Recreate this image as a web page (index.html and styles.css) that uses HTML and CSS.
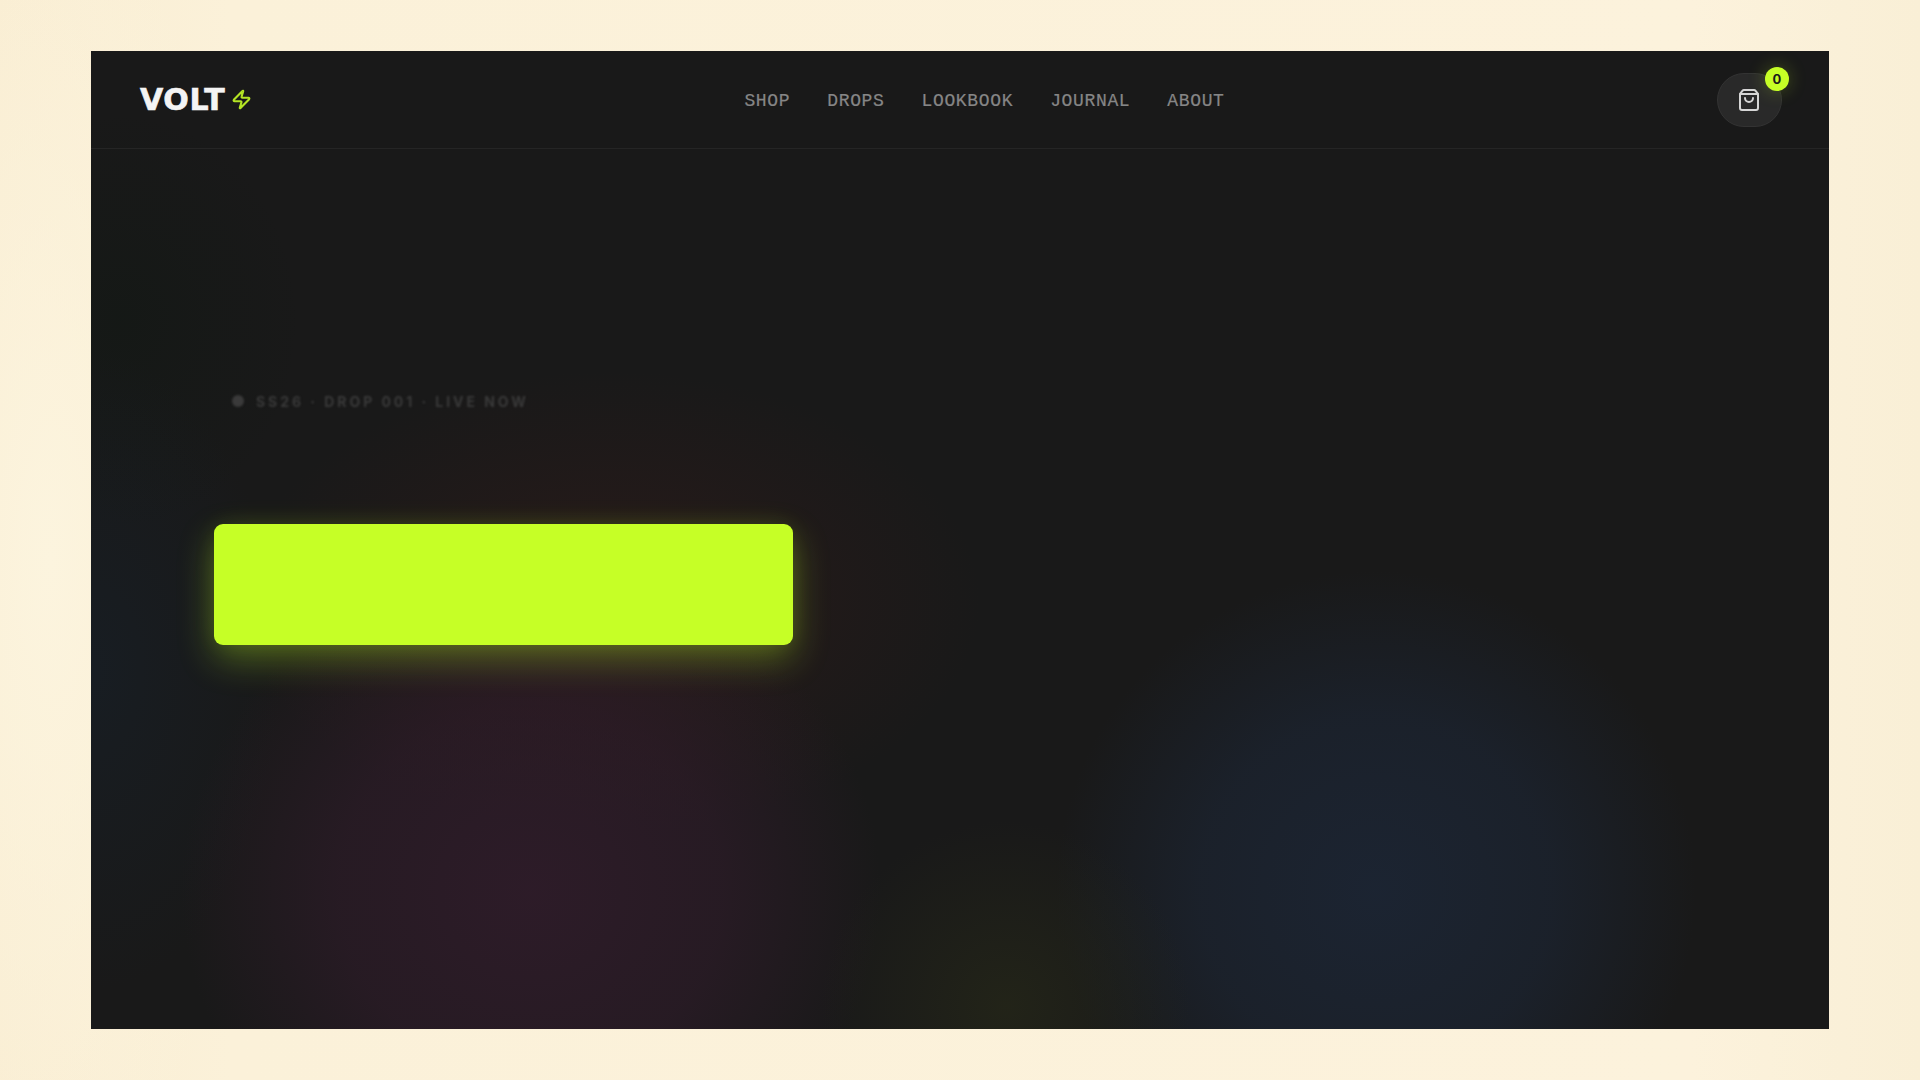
FILE: index.html
```html
<!DOCTYPE html>
<html lang="en">
<head>
<meta charset="utf-8">
<title>VOLT</title>
<link rel="stylesheet" href="styles.css">
</head>
<body>
<div class="stage">
  <div class="blob blob-corner"></div>
  <div class="blob blob-left"></div>
  <div class="blob blob-red"></div>
  <div class="blob blob-plum"></div>
  <div class="blob blob-blue"></div>
  <div class="blob blob-olive"></div>
  <header class="topbar">
    <a class="logo">VOLT
      <svg class="logo-bolt" viewBox="0 0 24 24" fill="none" stroke="currentColor" stroke-width="2.4" stroke-linecap="round" stroke-linejoin="round"><path d="M4 14a1 1 0 0 1-.78-1.63l9.9-10.2a.5.5 0 0 1 .86.46l-1.92 6.02A1 1 0 0 0 13 10h7a1 1 0 0 1 .78 1.63l-9.9 10.2a.5.5 0 0 1-.86-.46l1.92-6.02A1 1 0 0 0 11 14z"/></svg>
    </a>
    <nav class="nav">
      <a>SHOP</a><a>DROPS</a><a>LOOKBOOK</a><a>JOURNAL</a><a>ABOUT</a>
    </nav>
    <button class="cart">
      <svg class="cart-icon" viewBox="0 0 24 24" fill="none" stroke="currentColor" stroke-width="2" stroke-linecap="round" stroke-linejoin="round"><path d="M16 10a4 4 0 0 1-8 0"/><path d="M3.103 6.034h17.794"/><path d="M3.4 5.467a2 2 0 0 0-.4 1.2V20a2 2 0 0 0 2 2h14a2 2 0 0 0 2-2V6.667a2 2 0 0 0-.4-1.2l-2-2.667A2 2 0 0 0 17 2H7a2 2 0 0 0-1.6.8z"/></svg>
      <span class="cart-badge">0</span>
    </button>
  </header>
  <main class="hero">
    <div class="eyebrow"><span class="eyebrow-dot"></span><span>SS26 · DROP 001 · LIVE NOW</span></div>
    <div class="cta"></div>
  </main>
</div>
</body>
</html>
```
FILE: styles.css
```css
* { box-sizing: border-box; }
html, body { height: 100%; }
body {
  margin: 0;
  height: 1080px;
  overflow: hidden;
  padding: 51px 91px;
  background:
    radial-gradient(ellipse 200px 700px at 50px 560px, #fcf4de 0%, rgba(252,244,222,0) 100%),
    linear-gradient(90deg, #f9edd2 0%, #fbf1d9 12%, #fcf2dc 88%, #f9efd6 100%);
}
.stage {
  position: relative;
  width: 1738px;
  height: 978px;
  background: #191919;
  overflow: hidden;
  font-family: "Inter", "Liberation Sans", sans-serif;
}
.blob { position: absolute; border-radius: 50%; }
.blob-corner {
  left: -150px; top: 60px; width: 360px; height: 420px;
  background: radial-gradient(closest-side, rgba(18,24,20,.6), rgba(18,24,20,0));
}
.blob-left {
  left: -190px; top: 300px; width: 380px; height: 640px;
  background: radial-gradient(closest-side, rgba(22,34,46,.45), rgba(22,34,46,0));
}
.blob-red {
  left: 150px; top: 320px; width: 740px; height: 460px;
  background: radial-gradient(closest-side, rgba(60,28,26,.45), rgba(60,28,26,0));
}
.blob-plum {
  left: 90px; top: 510px; width: 700px; height: 660px;
  background: radial-gradient(closest-side, rgba(50,28,44,.8), rgba(50,28,44,.55) 55%, rgba(50,28,44,0));
}
.blob-blue {
  left: 965px; top: 520px; width: 640px; height: 640px;
  background: radial-gradient(closest-side, rgba(28,38,54,.85), rgba(28,38,54,.6) 55%, rgba(28,38,54,0));
}
.blob-olive {
  left: 730px; top: 770px; width: 370px; height: 370px;
  background: radial-gradient(closest-side, rgba(38,40,24,.7), rgba(38,40,24,0));
}
.topbar {
  position: relative;
  height: 98px;
  padding: 0 47px 0 49px;
  display: flex;
  align-items: center;
  justify-content: space-between;
  border-bottom: 1px solid #252525;
}
.logo {
  display: flex;
  align-items: center;
  gap: 6px;
  width: 112px;
  font-family: "DejaVu Sans", sans-serif;
  font-weight: 700;
  font-size: 30px;
  letter-spacing: .6px;
  -webkit-text-stroke: .6px #f4f4f4;
  color: #f4f4f4;
}
.logo-bolt { width: 21px; height: 21px; color: #b4e424; flex: none; }
.nav {
  display: flex;
  gap: 37px;
  padding-top: 2px;
  font-family: "Liberation Mono", monospace;
  font-size: 18px;
  letter-spacing: .65px;
  -webkit-text-stroke: .2px #868686;
  color: #868686;
}
.cart {
  position: relative;
  width: 65px;
  height: 54px;
  margin: 0;
  padding: 0;
  border: 1px solid #333;
  border-radius: 27px;
  background: #292929;
  color: #d6d6d6;
  display: flex;
  align-items: center;
  justify-content: center;
}
.cart-icon { width: 24px; height: 24px; }
.cart-badge {
  position: absolute;
  top: -7px;
  right: -8px;
  width: 24px;
  height: 24px;
  border-radius: 50%;
  background: #c6ff26;
  color: #1a1a1a;
  font: 700 13px/24px "Inter", sans-serif;
  text-align: center;
  box-shadow: 0 0 18px rgba(198,255,38,.25);
}
.hero {
  position: relative;
  padding: 240px 0 0 123px;
}
.eyebrow {
  display: flex;
  align-items: center;
  gap: 12px;
  height: 24px;
  padding-left: 18px;
  font-family: "Inter", "Liberation Sans", sans-serif;
  font-weight: 700;
  font-size: 14px;
  letter-spacing: 2.95px;
  color: #3a3a3a;
  filter: blur(1.2px);
}
.eyebrow-dot { width: 12px; height: 12px; border-radius: 50%; background: #3a3a3a; flex: none; }
.cta {
  margin-top: 111px;
  width: 579px;
  height: 121px;
  border-radius: 9px;
  background: #c6ff26;
  box-shadow: 0 14px 36px rgba(190,255,38,.32), 0 0 22px rgba(190,255,38,.08);
}
```
